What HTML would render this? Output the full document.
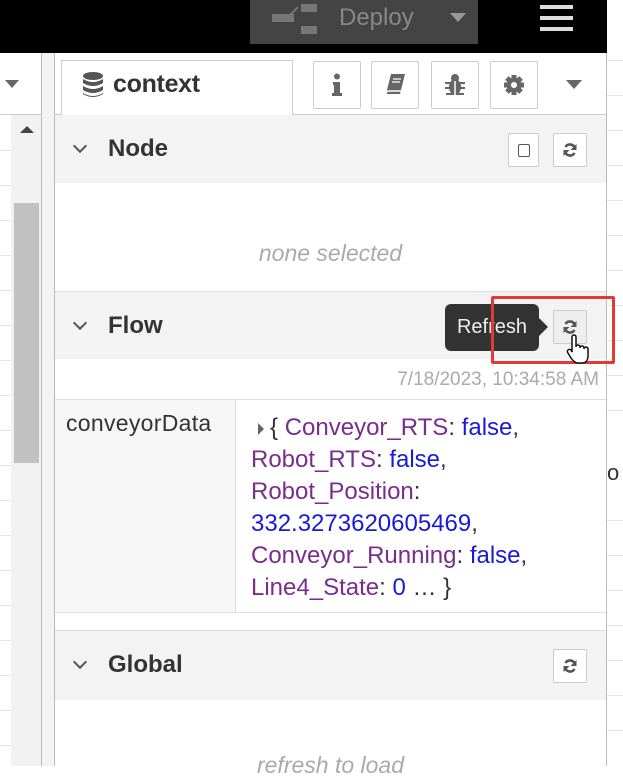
<!DOCTYPE html><html><head><style>
body{margin:0;width:623px;height:766px;overflow:hidden;position:relative;font-family:"Liberation Sans",sans-serif;background:#fff}
.a{position:absolute}
.btn{position:absolute;border:1px solid #ccc;background:#fff;border-radius:2px;box-sizing:border-box;display:flex;align-items:center;justify-content:center;color:#666}
.hdr{position:absolute;left:55px;width:551px;background:#f3f3f3;}
.ht{position:absolute;left:53px;font-size:24px;font-weight:bold;color:#333}
.chev{position:absolute;left:20px;width:8px;height:8px;border-right:2px solid #555;border-bottom:2px solid #555;transform:rotate(45deg)}
.k{color:#7b2d8e}.v{color:#1a1ad6}
.gl{position:absolute;height:1px;background:#e4e4e4}
</style></head><body>
<svg width="0" height="0" style="position:absolute"><defs><symbol id="rf" viewBox="0 0 16 16"><path d="M13 6.5A5.2 5.2 0 0 0 3.5 5" fill="none" stroke="#555" stroke-width="2.6"/><path d="M14.5 2v6h-6z" fill="#555"/><path d="M3 9.5A5.2 5.2 0 0 0 12.5 11" fill="none" stroke="#555" stroke-width="2.6"/><path d="M1.5 14V8h6z" fill="#555"/></symbol></defs></svg>
<div class="a" style="left:0;top:0;width:623px;height:53px;background:#000"></div>
<div class="a" style="left:250px;top:0;width:228px;height:44px;background:#444"></div>
<div class="a" style="left:272px;top:14px;width:22px;height:8px;background:#777"></div>
<div class="a" style="left:301px;top:4px;width:16px;height:8px;background:#777"></div>
<div class="a" style="left:301px;top:26px;width:16px;height:8px;background:#777"></div>
<div class="a" style="left:292px;top:5px;width:2px;height:14px;background:#777;transform:rotate(45deg)"></div>
<div class="a" style="left:339px;top:4px;font-size:24px;color:#888">Deploy</div>
<div class="a" style="left:450px;top:13px;border-left:8px solid transparent;border-right:8px solid transparent;border-top:9px solid #999"></div>
<div class="a" style="left:540px;top:5px;width:33px;height:4px;background:#ddd;box-shadow:0 11px 0 #ddd,0 22px 0 #ddd"></div>
<div class="a" style="left:607px;top:0;width:16px;height:766px;background:#fff"></div>
<div class="gl" style="left:607px;top:60px;width:16px"></div><div class="gl" style="left:607px;top:95px;width:16px"></div><div class="gl" style="left:607px;top:130px;width:16px"></div><div class="gl" style="left:607px;top:165px;width:16px"></div><div class="gl" style="left:607px;top:200px;width:16px"></div><div class="gl" style="left:607px;top:235px;width:16px"></div><div class="gl" style="left:607px;top:270px;width:16px"></div><div class="gl" style="left:607px;top:305px;width:16px"></div><div class="gl" style="left:607px;top:340px;width:16px"></div><div class="gl" style="left:607px;top:375px;width:16px"></div><div class="gl" style="left:607px;top:410px;width:16px"></div><div class="gl" style="left:607px;top:520px;width:16px"></div><div class="gl" style="left:607px;top:555px;width:16px"></div><div class="gl" style="left:607px;top:590px;width:16px"></div><div class="gl" style="left:607px;top:625px;width:16px"></div><div class="gl" style="left:607px;top:660px;width:16px"></div><div class="gl" style="left:607px;top:695px;width:16px"></div><div class="gl" style="left:607px;top:730px;width:16px"></div>
<div class="a" style="left:606px;top:53px;width:1px;height:713px;background:#bbb"></div>
<!-- left -->
<div class="a" style="left:0;top:114px;width:41px;height:1px;background:#ccc"></div>
<div class="gl" style="left:0;top:150px;width:11px"></div><div class="gl" style="left:0;top:185px;width:11px"></div><div class="gl" style="left:0;top:220px;width:11px"></div><div class="gl" style="left:0;top:255px;width:11px"></div><div class="gl" style="left:0;top:290px;width:11px"></div><div class="gl" style="left:0;top:325px;width:11px"></div><div class="gl" style="left:0;top:360px;width:11px"></div><div class="gl" style="left:0;top:395px;width:11px"></div><div class="gl" style="left:0;top:430px;width:11px"></div><div class="gl" style="left:0;top:465px;width:11px"></div><div class="gl" style="left:0;top:500px;width:11px"></div><div class="gl" style="left:0;top:535px;width:11px"></div><div class="gl" style="left:0;top:570px;width:11px"></div><div class="gl" style="left:0;top:605px;width:11px"></div><div class="gl" style="left:0;top:640px;width:11px"></div><div class="gl" style="left:0;top:675px;width:11px"></div><div class="gl" style="left:0;top:710px;width:11px"></div><div class="gl" style="left:0;top:745px;width:11px"></div>
<div class="a" style="left:5px;top:80px;border-left:7px solid transparent;border-right:7px solid transparent;border-top:8px solid #666"></div>
<div class="a" style="left:11px;top:115px;width:30px;height:651px;background:#f1f1f1"></div>
<div class="a" style="left:14px;top:203px;width:25px;height:260px;background:#c1c1c1"></div>
<div class="a" style="left:20px;top:126px;border-left:7px solid transparent;border-right:7px solid transparent;border-bottom:7px solid #444"></div>
<div class="a" style="left:41px;top:53px;width:1px;height:713px;background:#bbb"></div>
<div class="a" style="left:42px;top:53px;width:12px;height:713px;background:#f3f3f3"></div>
<div class="a" style="left:54px;top:53px;width:1px;height:713px;background:#bbb"></div>
<!-- tabs -->
<div class="a" style="left:55px;top:114px;width:551px;height:1px;background:#ccc"></div>
<div class="a" style="left:61px;top:60px;width:232px;height:55px;border:1px solid #ccc;border-bottom:none;box-sizing:border-box;background:#fff"></div>
<svg class="a" style="left:82px;top:72px" width="22" height="26" viewBox="0 0 22 26"><g fill="#555"><ellipse cx="11" cy="4" rx="10" ry="4"/><path d="M1 7q10 6 20 0v4q-10 6-20 0z"/><path d="M1 14q10 6 20 0v4q-10 6-20 0z"/><path d="M1 21q10 6 20 0v1q-10 6-20 0z"/></g></svg>
<div class="a" style="left:113px;top:70px;font-size:25px;font-weight:bold;color:#333;letter-spacing:-0.3px">context</div>
<div class="btn" style="left:313px;top:61px;width:48px;height:48px"><svg width="12" height="24"><circle cx="6" cy="3.5" r="3" fill="#666"/><path d="M2 9h7v11h2v3H1v-3h2v-8H2z" fill="#666"/></svg></div>
<div class="btn" style="left:371px;top:61px;width:48px;height:48px"><svg width="22" height="24"><path d="M7 1h14l-5 20H2z" fill="#666"/><path d="M2 21c0-3 2-3 4-3h13" stroke="#fff" stroke-width="1.5" fill="none"/><path d="M9 6h8M8 9h8" stroke="#fff" stroke-width="1.2"/></svg></div>
<div class="btn" style="left:431px;top:61px;width:48px;height:48px"><svg width="22" height="24"><ellipse cx="11" cy="14" rx="6" ry="8" fill="#666"/><circle cx="11" cy="5" r="4" fill="#666"/><path d="M1 10h20M1 15h20M2 21h18" stroke="#666" stroke-width="2"/><path d="M11 8v15" stroke="#fff" stroke-width="1.5"/></svg></div>
<div class="btn" style="left:490px;top:61px;width:48px;height:48px"><svg width="22" height="22" viewBox="0 0 22 22"><g fill="#666" transform="translate(11 11)"><rect x="-2.5" y="-10" width="5" height="20"/><rect x="-2.5" y="-10" width="5" height="20" transform="rotate(45)"/><rect x="-2.5" y="-10" width="5" height="20" transform="rotate(90)"/><rect x="-2.5" y="-10" width="5" height="20" transform="rotate(135)"/><circle r="7.5"/></g><circle cx="11" cy="11" r="3" fill="#fff"/></svg></div>
<div class="a" style="left:566px;top:80px;border-left:8px solid transparent;border-right:8px solid transparent;border-top:9px solid #666"></div>
<!-- Node -->
<div class="hdr" style="top:115px;height:68px"><div class="chev" style="top:26px"></div><div class="ht" style="top:20px">Node</div></div>
<div class="btn" style="left:508px;top:133px;width:31px;height:34px"><div style="width:10px;height:11px;border:1.5px solid #555;border-radius:2px"></div></div>
<div class="btn" style="left:553px;top:133px;width:34px;height:34px"><svg width="16" height="16"><use href="#rf"/></svg></div>
<div class="a" style="left:55px;top:240px;width:551px;text-align:center;font-size:23px;font-style:italic;color:#aaa">none selected</div>
<div class="a" style="left:55px;top:291px;width:551px;height:1px;background:#ddd"></div>
<!-- Flow -->
<div class="hdr" style="top:292px;height:67px"><div class="chev" style="top:26px"></div><div class="ht" style="top:20px">Flow</div></div>
<div class="btn" style="left:553px;top:310px;width:34px;height:34px;background:#eee"><svg width="16" height="16"><use href="#rf"/></svg></div>
<div class="a" style="left:445px;top:304px;width:94px;height:47px;background:#333;border-radius:6px;color:#eee;font-size:20px;line-height:47px;text-align:center">Refresh</div>
<div class="a" style="left:539px;top:318px;border-top:9px solid transparent;border-bottom:9px solid transparent;border-left:9px solid #333"></div>
<div class="a" style="left:491px;top:296px;width:124px;height:68px;border:3px solid #e53935;border-radius:2px;box-sizing:border-box"></div>
<svg class="a" style="left:566px;top:334px" width="26" height="32" viewBox="0 0 26 32"><path d="M6 3a2 2 0 0 1 4 0v10a2 2 0 0 1 4 0v1a2 2 0 0 1 4 0v1a2 2 0 0 1 4 0v7c0 4-2 7-6 7h-4c-3 0-5-2-7-5L2 19a2 2 0 0 1 3-3l1 2z" fill="#fff" stroke="#111" stroke-width="1.5"/></svg>
<div class="a" style="left:370px;top:369px;width:229px;text-align:right;font-size:19px;color:#aaa">7/18/2023, 10:34:58 AM</div>
<div class="a" style="left:55px;top:399px;width:551px;height:1px;background:#ddd"></div>
<div class="a" style="left:55px;top:400px;width:180px;height:212px;background:#f7f7f7"></div>
<div class="a" style="left:235px;top:400px;width:1px;height:212px;background:#ddd"></div>
<div class="a" style="left:66px;top:410px;font-size:23px;color:#333;letter-spacing:0.3px">conveyorData</div>
<div class="a" style="left:251px;top:412px;width:354px;font-size:24px;line-height:32px;color:#333;white-space:nowrap"><span style="display:inline-block;border-top:6px solid transparent;border-bottom:6px solid transparent;border-left:6px solid #666;margin:0 6px 0 7px"></span>{ <span class="k">Conveyor_RTS</span>: <span class="v">false</span>,<br><span class="k">Robot_RTS</span>: <span class="v">false</span>,<br><span class="k">Robot_Position</span>:<br><span class="v">332.3273620605469</span>,<br><span class="k">Conveyor_Running</span>: <span class="v">false</span>,<br><span class="k">Line4_State</span>: <span class="v">0</span> … }</div>
<div class="a" style="left:55px;top:612px;width:551px;height:1px;background:#ddd"></div>
<div class="a" style="left:55px;top:630px;width:551px;height:1px;background:#ddd"></div>
<!-- Global -->
<div class="hdr" style="top:631px;height:69px"><div class="chev" style="top:26px"></div><div class="ht" style="top:20px">Global</div></div>
<div class="btn" style="left:553px;top:649px;width:34px;height:34px"><svg width="16" height="16"><use href="#rf"/></svg></div>
<div class="a" style="left:55px;top:752px;width:551px;text-align:center;font-size:23px;font-style:italic;color:#aaa">refresh to load</div>
<div class="a" style="left:607px;top:460px;font-size:22px;color:#333">o</div>
</body></html>
